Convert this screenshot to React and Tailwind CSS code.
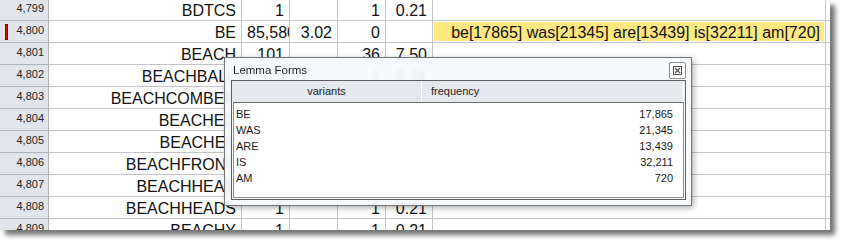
import React from 'react';

const rows = [
    ['4,799', 'BDTCS', '1', '', '1', '0.21', ''],
    ['4,800', 'BE', '85,580', '3.02', '0', '', 'be[17865] was[21345] are[13439] is[32211] am[720]'],
    ['4,801', 'BEACH', '101', '', '36', '7.50', ''],
    ['4,802', 'BEACHBALL', '1', '', '1', '0.21', ''],
    ['4,803', 'BEACHCOMBER', '1', '', '1', '0.21', ''],
    ['4,804', 'BEACHED', '3', '', '1', '0.21', ''],
    ['4,805', 'BEACHES', '24', '', '9', '1.92', ''],
    ['4,806', 'BEACHFRONT', '2', '', '1', '0.21', ''],
    ['4,807', 'BEACHHEAD', '1', '', '1', '0.21', ''],
    ['4,808', 'BEACHHEADS', '1', '', '1', '0.21', ''],
    ['4,809', 'BEACHY', '1', '', '1', '0.21', ''],
];

const forms = [
    ['BE', '17,865'],
    ['WAS', '21,345'],
    ['ARE', '13,439'],
    ['IS', '32,211'],
    ['AM', '720'],
];

const cell = 'h-[22px] border-r border-b border-[#c4c4c4] px-[5px] text-right whitespace-nowrap overflow-hidden leading-[22px] pt-[1px]';

const SheetRow = ({ row, selected }) => (
    <div className="flex">
        <div className="relative w-[49px] h-[22px] shrink-0 border-r border-b border-[#aeb4bc] bg-[#e2e6eb] text-right pr-[4px] pt-[2px] text-[11px] leading-[14px] text-[#222]">
            {selected && <div className="absolute left-[5px] top-[3px] w-[3px] h-[16px] bg-[#e01818] border border-[#7a0000]" />}
            {row[0]}
        </div>
        <div className={`w-[193px] shrink-0 ${cell}`}>{row[1]}</div>
        <div className={`w-[48px] shrink-0 ${cell}`}>{row[2]}</div>
        <div className={`w-[48px] shrink-0 ${cell}`}>{row[3]}</div>
        <div className={`w-[48px] shrink-0 ${cell}`}>{row[4]}</div>
        <div className={`w-[47px] shrink-0 ${cell}`}>{row[5]}</div>
        <div className="w-[393px] shrink-0 h-[22px] border-r border-b border-[#c4c4c4] p-[1px]">
            {row[6] && (
                <div className="h-full bg-[#fde882] text-right pr-[4px] leading-[20px] pt-[1px] whitespace-nowrap">{row[6]}</div>
            )}
        </div>
        <div className="w-[10px] shrink-0 h-[22px] border-b border-[#c4c4c4]" />
    </div>
);

const LemmaDialog = () => (
    <div className="absolute left-[224px] top-[57px] w-[468px] h-[149px] flex flex-col border border-[#747474] bg-[#f6f9fd]/90 backdrop-blur-[2px] shadow-[2px_2px_6px_rgba(0,0,0,0.3)] font-['Liberation_Sans',sans-serif]">
        <div className="relative h-[22px] shrink-0 pl-[8px] pt-[4px] text-[11.5px] leading-[16px] text-[#1e1e1e]">
            Lemma Forms
            <div className="absolute right-[5px] top-[4px] w-[17px] h-[17px] rounded-[2px] border border-[#8c8c8c] bg-white flex items-center justify-center">
                <svg width="9" height="9" viewBox="0 0 9 9" fill="none" stroke="#555" strokeWidth="1">
                    <rect x="0.5" y="0.5" width="8" height="8" />
                    <path d="M2 2 L7 7 M7 2 L2 7" strokeWidth="1.4" />
                </svg>
            </div>
        </div>
        <div className="ml-[6px] mr-[5px] mb-[5px] flex-1 flex flex-col border border-[#5e5e5e] bg-white">
            <div className="flex h-[21px] shrink-0 bg-[#e5e8ed] text-[11px] leading-[21px] text-[#222]">
                <div className="w-[189px] text-center">variants</div>
                <div className="w-[1px] bg-white" />
                <div className="flex-1 pl-[9px]">frequency</div>
                <div className="w-[3px] bg-[#f4f5f7]" />
            </div>
            <div className="flex-1 mx-[1px] mb-[1px] border border-[#8f8f8f] border-t-[#6a6a6a] pt-[3px] text-[11px] text-[#1a1a1a]">
                {forms.map(([w, f]) => (
                    <div key={w} className="flex h-[16px] leading-[16px] pl-[2px] pr-[10px]">
                        <span className="flex-1">{w}</span>
                        <span>{f}</span>
                    </div>
                ))}
            </div>
        </div>
    </div>
);

export default function App() {
    return (
        <div className="w-[846px] h-[246px] bg-white">
            <div className="relative w-[830px] h-[230px] overflow-hidden bg-white shadow-[5px_5px_5px_rgba(0,0,0,0.55)] text-[16px] text-[#111] font-['Liberation_Sans',Arial,sans-serif]">
                <div className="-mt-[1px]">
                    {rows.map((r, i) => (
                        <SheetRow key={r[0]} row={r} selected={i === 1} />
                    ))}
                </div>
                <LemmaDialog />
            </div>
        </div>
    );
}
